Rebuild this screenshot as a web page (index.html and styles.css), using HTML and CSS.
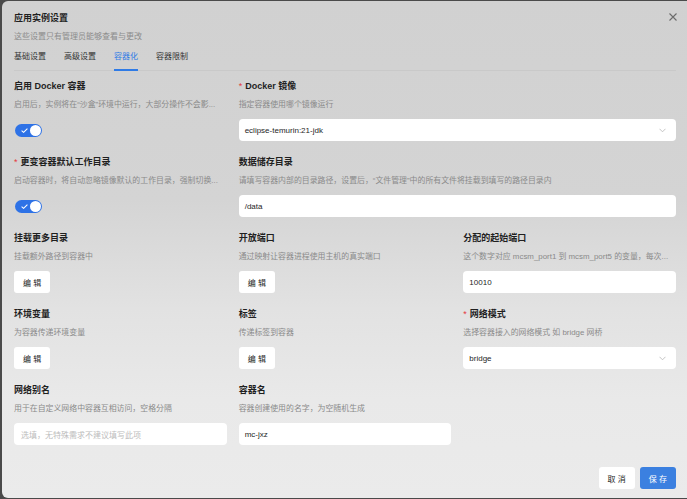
FILE: index.html
```html
<!DOCTYPE html>
<html lang="zh-CN">
<head>
    <meta charset="UTF-8">
    <meta name="viewport" content="width=device-width, initial-scale=1.0">
    <title>应用实例设置</title>
    <link rel="stylesheet" href="styles.css">
</head>
<body>

<div class="modal">
    <div class="modal-header">
        <div class="modal-title">应用实例设置</div>
        <div class="modal-subtitle">这些设置只有管理员能够查看与更改</div>
        <span class="modal-close">
            <svg width="8" height="8" viewBox="0 0 8 8"><path d="M0.5 0.5 L7.5 7.5 M7.5 0.5 L0.5 7.5" stroke="#6b6b6b" stroke-width="1.1" fill="none"/></svg>
        </span>
    </div>

    <div class="tabs">
        <span class="tab">基础设置</span>
        <span class="tab">高级设置</span>
        <span class="tab active">容器化</span>
        <span class="tab">容器限制</span>
    </div>

    <div class="form">
        <!-- 第一行 -->
        <div class="item">
            <div class="label">启用 Docker 容器</div>
            <div class="desc">启用后，实例将在“沙盒”环境中运行，大部分操作不会影...</div>
            <span class="switch">
                <svg class="check" width="7" height="5" viewBox="0 0 7 5"><path d="M0.6 2.6 L2.6 4.3 L6.4 0.6" stroke="#fff" stroke-width="1.1" fill="none"/></svg>
                <span class="knob"></span>
            </span>
        </div>
        <div class="item span-2">
            <div class="label"><span class="req">*</span>Docker 镜像</div>
            <div class="desc">指定容器使用哪个镜像运行</div>
            <div class="input select">
                <span>eclipse-temurin:21-jdk</span>
                <svg width="7" height="5" viewBox="0 0 7 5"><path d="M0.5 0.8 L3.5 3.8 L6.5 0.8" stroke="#bdbdbd" stroke-width="0.9" fill="none"/></svg>
            </div>
        </div>

        <!-- 第二行 -->
        <div class="item">
            <div class="label"><span class="req">*</span>更变容器默认工作目录</div>
            <div class="desc">启动容器时，将自动忽略镜像默认的工作目录，强制切换...</div>
            <span class="switch">
                <svg class="check" width="7" height="5" viewBox="0 0 7 5"><path d="M0.6 2.6 L2.6 4.3 L6.4 0.6" stroke="#fff" stroke-width="1.1" fill="none"/></svg>
                <span class="knob"></span>
            </span>
        </div>
        <div class="item span-2">
            <div class="label">数据储存目录</div>
            <div class="desc">请填写容器内部的目录路径，设置后，“文件管理”中的所有文件将挂载到填写的路径目录内</div>
            <div class="input">/data</div>
        </div>

        <!-- 第三行 -->
        <div class="item">
            <div class="label">挂载更多目录</div>
            <div class="desc">挂载额外路径到容器中</div>
            <div><button class="btn">编 辑</button></div>
        </div>
        <div class="item">
            <div class="label">开放端口</div>
            <div class="desc">通过映射让容器进程使用主机的真实端口</div>
            <div><button class="btn">编 辑</button></div>
        </div>
        <div class="item">
            <div class="label">分配的起始端口</div>
            <div class="desc">这个数字对应 mcsm_port1 到 mcsm_port5 的变量，每次...</div>
            <div class="input">10010</div>
        </div>

        <!-- 第四行 -->
        <div class="item">
            <div class="label">环境变量</div>
            <div class="desc">为容器传递环境变量</div>
            <div><button class="btn">编 辑</button></div>
        </div>
        <div class="item">
            <div class="label">标签</div>
            <div class="desc">传递标签到容器</div>
            <div><button class="btn">编 辑</button></div>
        </div>
        <div class="item">
            <div class="label"><span class="req">*</span>网络模式</div>
            <div class="desc">选择容器接入的网络模式 如 bridge 网桥</div>
            <div class="input select">
                <span>bridge</span>
                <svg width="7" height="5" viewBox="0 0 7 5"><path d="M0.5 0.8 L3.5 3.8 L6.5 0.8" stroke="#bdbdbd" stroke-width="0.9" fill="none"/></svg>
            </div>
        </div>

        <!-- 第五行 -->
        <div class="item">
            <div class="label">网络别名</div>
            <div class="desc">用于在自定义网络中容器互相访问，空格分隔</div>
            <div class="input placeholder">选填，无特殊需求不建议填写此项</div>
        </div>
        <div class="item">
            <div class="label">容器名</div>
            <div class="desc">容器创建使用的名字，为空随机生成</div>
            <div class="input">mc-jxz</div>
        </div>
    </div>

    <div class="footer">
        <button class="btn">取 消</button>
        <button class="btn primary">保 存</button>
    </div>
</div>

</body>
</html>
```

FILE: styles.css
```css
html, body {
    margin: 0;
    height: 499px;
    overflow: hidden;
}
body {
    background-color: #4a4a4a;
    padding: 1px 0 0 2px;
    box-sizing: border-box;
    font-family: "Liberation Sans", "Noto Sans CJK SC", sans-serif;
    color: #1f1f1f;
}
.modal {
    position: relative;
    height: 497px;
    box-sizing: border-box;
    padding: 10px 11px 0 12px;
    border-radius: 6px 0 0 6px;
    background: linear-gradient(180deg, #d1d1d1 0%, #d4d4d4 40%, #e2e2e2 62%, #e9e9e9 80%, #ebebeb 100%);
}
.modal-title {
    font-size: 9px;
    font-weight: bold;
    line-height: 14px;
}
.modal-subtitle {
    font-size: 8px;
    line-height: 14px;
    margin-top: 5px;
    color: #8c8c8c;
}
.modal-close {
    position: absolute;
    top: 12px;
    right: 10px;
    display: flex;
}
.tabs {
    display: flex;
    gap: 18px;
    margin-top: 6px;
    border-bottom: 1px solid #c9c9c9;
}
.tab {
    font-size: 8px;
    line-height: 14px;
    padding-bottom: 5px;
    color: #333;
    border-bottom: 2px solid transparent;
    margin-bottom: -1px;
}
.tab.active {
    color: #2f7be6;
    border-bottom-color: #2f7be6;
}
.form {
    display: grid;
    grid-template-columns: repeat(3, 1fr);
    column-gap: 12px;
    row-gap: 12px;
    padding-top: 6px;
}
.span-2 {
    grid-column: span 2;
}
.item {
    min-width: 0;
}
.label {
    font-size: 9px;
    font-weight: bold;
    line-height: 18px;
    margin-bottom: 1px;
    white-space: nowrap;
}
.req {
    color: #e5393d;
    margin-right: 3px;
    font-weight: normal;
}
.desc {
    font-size: 7.9px;
    line-height: 18px;
    margin-bottom: 5px;
    color: #8a8a8a;
    white-space: nowrap;
}
.input {
    display: flex;
    align-items: center;
    justify-content: space-between;
    height: 22px;
    box-sizing: border-box;
    padding: 0 10px 0 6px;
    background-color: #fff;
    border-radius: 4px;
    font-size: 8px;
    color: #262626;
}
.input.placeholder {
    color: #bcbcbc;
    padding-left: 7px;
}
.switch {
    display: inline-flex;
    align-items: center;
    justify-content: space-between;
    width: 27px;
    height: 13px;
    box-sizing: border-box;
    padding: 0 1px 0 6px;
    margin-left: 1px;
    border-radius: 7px;
    background-color: #2e72e6;
}
.knob {
    width: 11px;
    height: 11px;
    border-radius: 50%;
    background-color: #fff;
}
.btn {
    height: 22px;
    padding: 0 9px;
    border: none;
    border-radius: 3px;
    background-color: #fff;
    font-family: "Liberation Sans", "Noto Sans CJK SC", sans-serif;
    font-size: 8px;
    color: #262626;
    cursor: pointer;
}
.footer {
    display: flex;
    justify-content: flex-end;
    gap: 5px;
    margin-top: 22px;
}
.btn.primary {
    background-color: #3b80e0;
    color: #fff;
}
```
